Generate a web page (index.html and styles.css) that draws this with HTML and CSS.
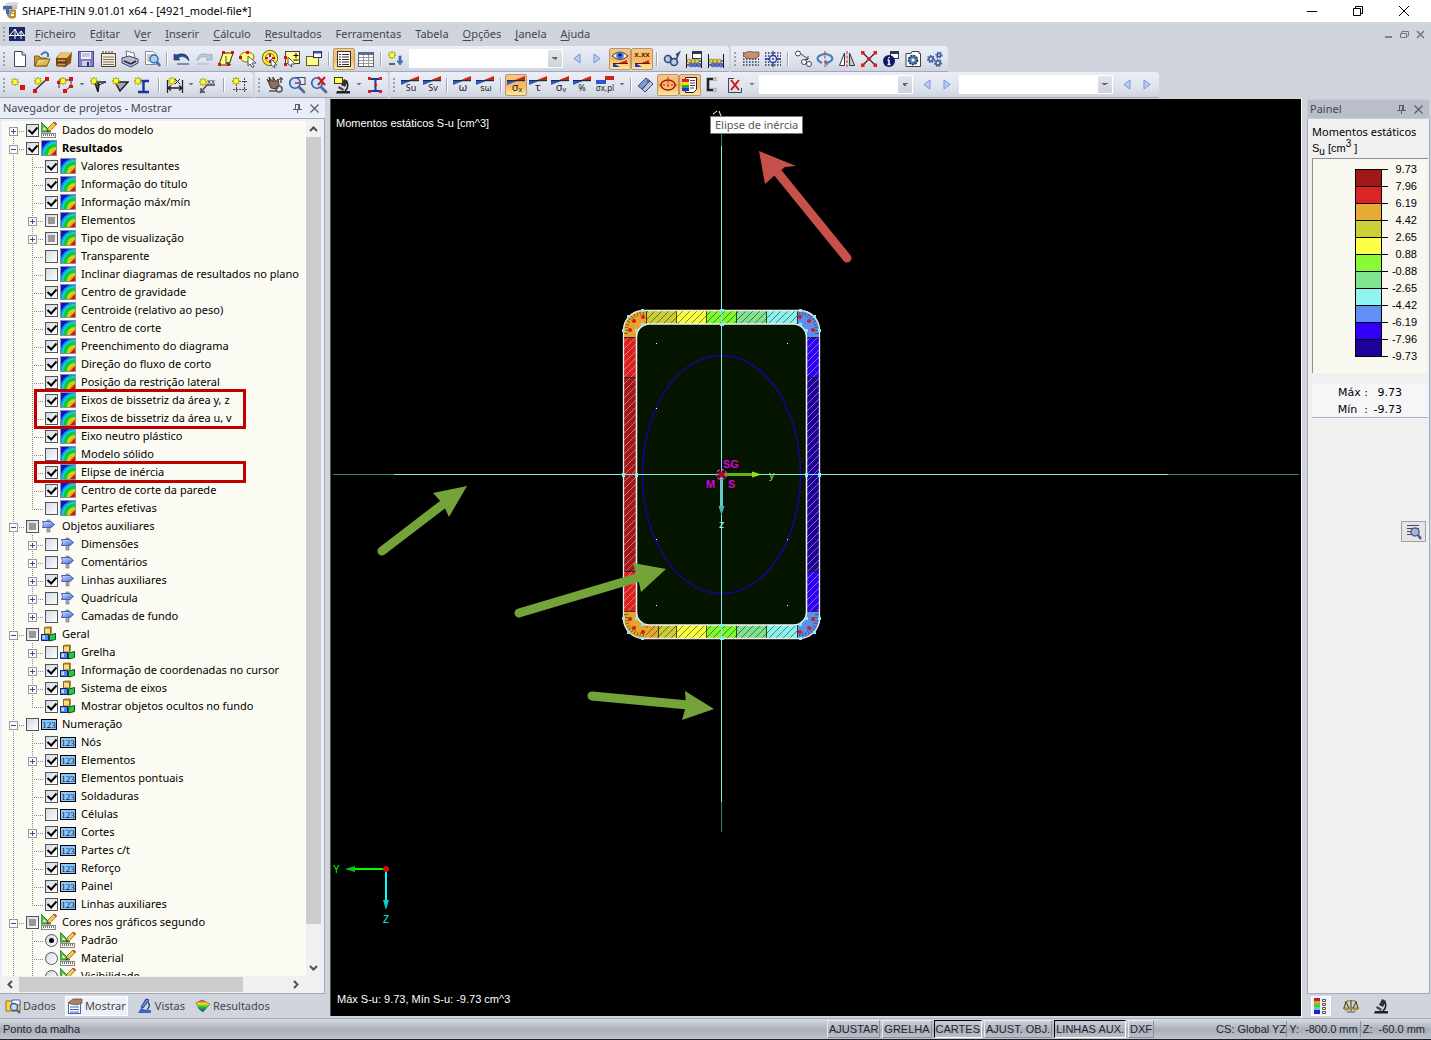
FILE: index.html
```html
<!DOCTYPE html>
<html lang="pt">
<head>
<meta charset="utf-8">
<title>SHAPE-THIN 9.01.01 x64 - [4921_model-file*]</title>
<link rel="stylesheet" href="styles.css">
</head>
<body>
<svg class="defs" width="0" height="0" aria-hidden="true">
  <defs>
    <linearGradient id="gBlue" x1="0" y1="0" x2="1" y2="1"><stop offset="0" stop-color="#c9e4ff"/><stop offset="1" stop-color="#3f66d8"/></linearGradient>
    <linearGradient id="gFold" x1="0" y1="0" x2="1" y2="1"><stop offset="0" stop-color="#fbe9a0"/><stop offset="1" stop-color="#c79a2a"/></linearGradient>
    <linearGradient id="gGrey" x1="0" y1="0" x2="0" y2="1"><stop offset="0" stop-color="#e4e4e8"/><stop offset="1" stop-color="#777a88"/></linearGradient>
    <linearGradient id="gSpec" x1="0" y1="0" x2="0" y2="1"><stop offset="0" stop-color="#e02010"/><stop offset=".3" stop-color="#f5e020"/><stop offset=".6" stop-color="#20c030"/><stop offset="1" stop-color="#1030e0"/></linearGradient>
    <pattern id="hatchDark" width="7" height="7" patternUnits="userSpaceOnUse"><path d="M-1 8L8 -1M-1 1L1 -1M6 8L8 6" stroke="#1c3a10" stroke-opacity=".75" stroke-width=".8"/></pattern>
    <pattern id="hatchLight" width="7" height="7" patternUnits="userSpaceOnUse"><path d="M-1 8L8 -1M-1 1L1 -1M6 8L8 6" stroke="#e8dcf0" stroke-opacity=".6" stroke-width=".8"/></pattern>
    <symbol id="star" viewBox="0 0 8 8"><path d="M4 0V8M0 4H8M1 1L7 7M7 1L1 7" stroke="#a8a800" stroke-width="1.4"/><circle cx="4" cy="4" r="2.2" fill="#ffff20"/></symbol>
    <symbol id="rb" viewBox="0 0 16 16"><rect width="16" height="16" fill="#8a8f98"/><svg x="1" y="1" width="14" height="14" viewBox="0 0 14 14"><rect width="14" height="14" fill="#1010d0"/><circle cx="14" cy="14" r="15" fill="#1090f0"/><circle cx="14" cy="14" r="13" fill="#10d8e0"/><circle cx="14" cy="14" r="11.500" fill="#10c840"/><circle cx="14" cy="14" r="8" fill="#c8e010"/><circle cx="14" cy="14" r="6" fill="#f0b010"/><path d="M14 9V14H9Z" fill="#e01010"/></svg></symbol>
    <symbol id="model" viewBox="0 0 16 16"><path d="M0 0L10 10H0Z" fill="#58b848" stroke="#2f8a2a"/><path d="M2.500 5L5.500 8H2.500Z" fill="#fcfcf4"/><path d="M6 10L7 6L13 0L15.500 2L9.500 8.500Z" fill="#f0cc50" stroke="#856018" stroke-width=".8"/><path d="M12.500 .5L14 0L16 2L14.800 3Z" fill="#c03030"/><path d="M6 10L6.500 7.500L8.500 9Z" fill="#333"/><rect x=".5" y="11.500" width="14" height="4" fill="#f4f4f4" stroke="#888"/><path d="M2.500 12V14M4.500 12V14M6.500 12V14M8.500 12V14M10.500 12V14M12.500 12V14" stroke="#777"/></symbol>
    <symbol id="sign" viewBox="0 0 16 16"><rect x="6" y="2" width="3" height="12" fill="#a8a8a8" stroke="#707070" stroke-width=".6"/><path d="M1.500 3.500H10L13.500 6.500L10 9.500H1.500L2.500 6.500Z" fill="url(#gBlue)" stroke="#4a5fb8"/></symbol>
    <symbol id="cubes" viewBox="0 0 16 16"><path d="M3 1.500L5 .5H11V7L9 8.500H3Z" fill="#b89030"/><rect x="3.500" y="2" width="6" height="6" fill="#f8dc80" stroke="#604810" stroke-width=".7"/><rect x=".5" y="8.500" width="7" height="6" fill="#5088f0" stroke="#152870"/><path d="M1.500 9.500H4V13H1.500Z" fill="#b8dcff"/><path d="M8.500 9L14.500 7.500V13.500L8.500 15Z" fill="#28c850" stroke="#0c5020"/></symbol>
    <symbol id="num" viewBox="0 0 16 16"><rect x=".5" y="3.500" width="15" height="10" fill="#8cc4ff" stroke="#000"/><text x="8" y="12" font-family="Liberation Serif,serif" font-size="9" text-anchor="middle" fill="#001830">123</text></symbol>
    <symbol id="sig" viewBox="0 0 18 18"><path d="M0 4H18V5.200H0Z" fill="#252a38"/><path d="M8 4L18 0V4Z" fill="#c82818"/><path d="M0 5H10L0 9Z" fill="#2858c8"/></symbol>
    <symbol id="prev" viewBox="0 0 8 12"><path d="M7 1V10L.8 5.500Z" fill="#b4ccf8" stroke="#7c94d0"/></symbol>
    <symbol id="next" viewBox="0 0 8 12"><path d="M1 1V10L7.200 5.500Z" fill="#b4ccf8" stroke="#7c94d0"/></symbol>
    <symbol id="micro" viewBox="0 0 16 16"><path d="M9 1L13 3L10 9L6 7Z" fill="#333"/><path d="M11 3Q15 8 10 13" fill="none" stroke="#222" stroke-width="1.600"/><path d="M4 8L9 11L8 13L3 10Z" fill="#444"/><path d="M2 13H15V15.500H1Z" fill="#222"/></symbol>
    <symbol id="pin" viewBox="0 0 9 9"><path d="M2.500 0V5.500M6.500 0V5.500M2 .5H7M0 5.500H9M4.500 6V9M5.500 0V5" stroke="#5a5e68" fill="none"/></symbol>
    <symbol id="cross" viewBox="0 0 9 9"><path d="M.5 .5L8.500 8.500M8.500 .5L.5 8.500" stroke="#5a5e68" stroke-width="1.200"/></symbol>
    <symbol id="lens" viewBox="0 0 18 18"><circle cx="7" cy="7" r="5.300" fill="#c8e4fa" stroke="#3858a8" stroke-width="1.600"/><path d="M11 11L16 16" stroke="#5068a0" stroke-width="2.800" stroke-linecap="round"/></symbol>
    <symbol id="gridDots" viewBox="0 0 18 18"><path d="M1 3H17M1 6H17M1 9H17M1 12H17M1 15H17" stroke="#303848" stroke-width="1.500" stroke-dasharray="1.500 1.500"/></symbol>
    <symbol id="abacus" viewBox="0 0 18 18"><path d="M1.500 4V18M16.500 4V18M1 11H17M1 15H17" stroke="#151515" fill="none"/><g fill="#e8d040" stroke="#705c10" stroke-width=".5"><circle cx="4" cy="11" r="2"/><circle cx="8" cy="11" r="2"/><circle cx="12" cy="11" r="2"/></g><g fill="#5878d0" stroke="#203070" stroke-width=".5"><circle cx="6" cy="15" r="2"/><circle cx="10" cy="15" r="2"/><circle cx="14" cy="15" r="2"/></g></symbol>
  </defs>
</svg>

<header class="titlebar">
  <svg class="appicon" width="16" height="18" viewBox="0 0 16 18"><path d="M1 4L6 0H16L15 7L9 9V17L5 14V9L1 8Z" fill="url(#gGrey)"/><path d="M1 4H10V7H7V12H4V7H1Z" fill="#4868a8"/><path d="M8 8H14V15Q12 18 8 16V14H12V12Q8 13 8 8ZM10 10H12V11H10Z" fill="#c09020" fill-rule="evenodd"/></svg>
  <h1>SHAPE-THIN 9.01.01 x64 - [4921_model-file*]</h1>
  <div class="winbtns">
    <button aria-label="Minimizar"><svg width="12" height="12"><path d="M1 6.500H11" stroke="#000"/></svg></button>
    <button aria-label="Restaurar"><svg width="12" height="12"><path d="M1.500 3.500H8.500V10.500H1.500ZM3.500 3V1.500H10.500V8.500H9" fill="none" stroke="#000"/></svg></button>
    <button aria-label="Fechar"><svg width="12" height="12"><path d="M1 1L11 11M11 1L1 11" stroke="#000"/></svg></button>
  </div>
</header>

<nav class="menubar">
  <i class="grip"></i>
  <svg class="logo" width="16" height="14" viewBox="0 0 16 14"><rect width="16" height="14" fill="#182868"/><path d="M0 8.500H16M6 2L1 8M6 2L9 8M12 4L9 8M12 4L15 8M6 2V12M12 4V12" stroke="#fff" fill="none"/></svg>
  <a href="#"><u>F</u>icheiro</a><a href="#">E<u>d</u>itar</a><a href="#">V<u>e</u>r</a><a href="#"><u>I</u>nserir</a><a href="#"><u>C</u>álculo</a><a href="#"><u>R</u>esultados</a><a href="#">Ferra<u>m</u>entas</a><a href="#">Tabela</a><a href="#"><u>O</u>pções</a><a href="#"><u>J</u>anela</a><a href="#"><u>A</u>juda</a>
  <div class="docbtns">
    <button aria-label="Minimizar documento"><svg width="9" height="9"><path d="M1 7H8" stroke="#666" stroke-width="1.500"/></svg></button>
    <button aria-label="Restaurar documento"><svg width="9" height="9"><path d="M.5 3.500H6.500V7.500H.5ZM2 3V1.500H8.500V6H7" fill="none" stroke="#777"/></svg></button>
    <button aria-label="Fechar documento"><svg width="9" height="9"><path d="M1 1L8 8M8 1L1 8" stroke="#777" stroke-width="1.600"/></svg></button>
  </div>
</nav>

<div class="bars">
<div class="barline">
  <div class="bar" role="toolbar">
    <i class="grip"></i>
    <button><svg><path d="M3.500 1.500H11L14.500 5V16.500H3.500Z" fill="#fff" stroke="#404858"/><path d="M11 1.500V5H14.500" fill="#d8dce8" stroke="#404858"/></svg></button>
    <button><svg><path d="M1.500 16V6H6L8 8H14V16Z" fill="#c89a30" stroke="#806010"/><path d="M2 16L5 9H17L14 16Z" fill="url(#gFold)" stroke="#806010"/><path d="M8 5Q12 0 15 4V7" stroke="#4870b8" stroke-width="2" fill="none"/></svg></button>
    <button><svg><path d="M1 8L6 2H17L16 13L10 17L1 15Z" fill="#8a5414"/><path d="M6 2H17L12 8H2Z" fill="#e8c078"/><path d="M2 9H11V12H2ZM2 13H11V16H2Z" fill="#d89840" stroke="#4a2c08"/></svg></button>
    <button><svg><rect x="1.500" y="1.500" width="15" height="15" fill="#8080c8" stroke="#484890"/><rect x="4" y="2" width="10" height="7" fill="#f0f0fa"/><path d="M5 4H13M5 6H13" stroke="#b090b0"/><rect x="5" y="11" width="8" height="5" fill="#d0d0d8"/><rect x="10" y="12" width="2" height="4" fill="#303060"/></svg></button>
    <button><svg><path d="M2.500 3.500H16.500V16.500H2.500Z" fill="#f4ece0" stroke="#504030"/><path d="M4 1V4M7 1V4M10 1V4M13 1V4" stroke="#504030"/><path d="M4 7H15M4 9.500H15M4 12H15M4 14.500H15" stroke="#807060"/></svg></button>
    <button><svg><path d="M5 1L13 3L14 9L6 8Z" fill="#fff" stroke="#707888"/><path d="M1 8L8 6L17 9V13L10 17L1 13Z" fill="#b8bcd0" stroke="#404858"/><path d="M3 11L10 14L15 11" stroke="#202838" stroke-width="1.500" fill="none"/></svg></button>
    <button><svg><path d="M2.500 1.500H10L13.500 5V14.500H2.500Z" fill="#fff" stroke="#888"/><path d="M4 5H10M4 7H9M4 9H8M4 11H8" stroke="#999"/><circle cx="11" cy="9" r="4" fill="#a8d0f4" stroke="#3868b0" stroke-width="1.500"/><path d="M14 12L17 16" stroke="#3868b0" stroke-width="2.500"/></svg></button>
    <i class="sep"></i>
    <button><svg><path d="M1 4V10H7L5 8Q11 4 16 11Q15 1 3 5Z" fill="#284898" stroke="#182858" stroke-width=".6"/><path d="M4 14H16" stroke="#203878"/></svg></button>
    <button><svg><path d="M17 4V10H11L13 8Q7 4 2 11Q3 1 15 5Z" fill="#b8c8e0" stroke="#8898b8" stroke-width=".6"/><path d="M2 14H14" stroke="#a0b0d0"/></svg></button>
    <button><svg><path d="M2 15L6 3H16L12 15Z" fill="#ffff80" stroke="#303000"/><g fill="#e01010"><path d="M1 13H4V16H1ZM5 1H8V4H5ZM14 1H17V4H14ZM10 13H13V16H10Z"/></g><path d="M9 6V14L11 12L14 15" fill="none" stroke="#444"/></svg></button>
    <button><svg><ellipse cx="8" cy="7" rx="7" ry="5" fill="#ffff80" stroke="#707000"/><g fill="#e01010"><path d="M7 1H10V4H7ZM0 6H3V9H0Z"/></g><path d="M9 6L17 13L13 13L15 17L13 17L11 14L9 16Z" fill="#fff" stroke="#555"/></svg></button>
    <button><svg><circle cx="9" cy="8" r="6" fill="none" stroke="#504c10" stroke-width="4"/><circle cx="9" cy="8" r="6" fill="none" stroke="#ffee20" stroke-width="2.500"/><path d="M8 4H10V7H8ZM8 10H10V13H8ZM4 7H7V9H4ZM11 7H14V9H11Z" fill="#e01010"/><path d="M10 9L16 15L13 15L14 18L10 15Z" fill="#fff" stroke="#555"/></svg></button>
    <button><svg><rect x="2.500" y="1.500" width="14" height="12" fill="#ffff90" stroke="#404040"/><path d="M13 3V8M10.500 5.500H15.500M10.500 10H15.500" stroke="#000"/><path d="M1 6H4V9H1ZM1 13H4V16H1Z" fill="#e01010"/><path d="M5 7L12 14L8 14L9 17L5 14Z" fill="#fff" stroke="#555"/></svg></button>
    <button><svg><rect x="1.500" y="6.500" width="12" height="9" fill="#ffff90" stroke="#605c20"/><rect x="8.500" y="1.500" width="8" height="6" fill="#fff" stroke="#283060"/><path d="M9 2.500H16" stroke="#3858a8" stroke-width="2"/></svg></button>
    <i class="sep"></i>
    <button class="on"><svg><rect x="2.500" y="1.500" width="13" height="15" fill="#fff" stroke="#303030"/><path d="M7 4.500H14M7 7H14M7 9.500H14M7 12H14M7 14.500H14" stroke="#303030"/><path d="M4 4.500H6M4 7H6M4 9.500H6M4 12H6M4 14.500H6" stroke="#303030"/></svg></button>
    <button><svg><rect x="1.500" y="2.500" width="15" height="14" fill="#fff" stroke="#666"/><path d="M2 4H16" stroke="#5070a8" stroke-width="2"/><path d="M2 7.500H16M2 10.500H16M2 13.500H16M6.500 5V16M11.500 5V16" stroke="#999"/></svg></button>
    <i class="sep"></i>
    <button><svg><use href="#star" x="1" y="1" width="8" height="8"/><path d="M2 14H8" stroke="#333" stroke-width="1.500"/><path d="M12 6H14V11H16L13 15L10 11H12Z" fill="#4878c8" stroke="#284890" stroke-width=".6"/></svg></button>
    <select aria-label="Caso de carga"><option></option></select>
    <button class="nav"><svg class="tri"><use href="#prev"/></svg></button>
    <button class="nav lastnav"><svg class="tri"><use href="#next"/></svg></button>
    <button class="on"><svg><path d="M1 6Q9 -2 17 6Q9 13 1 6Z" fill="#f4f8ff" stroke="#303848"/><circle cx="9" cy="5.500" r="3.800" fill="#4878d8"/><circle cx="9" cy="5" r="1.600" fill="#081028"/><path d="M2 13V17H9Z" fill="#1838e0"/><path d="M16 14V10L8 13Z" fill="#e02010"/><path d="M2 13.500H17" stroke="#502010"/></svg></button>
    <button class="on"><svg><text x="9" y="7" font-family="Liberation Sans,sans-serif" font-weight="bold" font-size="8" text-anchor="middle" fill="#402800">x.xx</text><path d="M2 13V17H9Z" fill="#1838e0"/><path d="M16 14V10L8 13Z" fill="#e02010"/><path d="M2 13.500H17" stroke="#502010"/></svg></button>
    <i class="sep"></i>
    <button><svg><circle cx="5" cy="9" r="3.500" fill="#b8c8e8" stroke="#384878" stroke-width="1.600"/><circle cx="11" cy="12" r="3.500" fill="#b8c8e8" stroke="#384878" stroke-width="1.600"/><path d="M7 7L9 10M13 10L16 3L13 5" stroke="#384878" stroke-width="1.800" fill="none"/></svg></button>
    <button><svg><use href="#abacus" width="18" height="18"/><rect x="7.500" y="1.500" width="9" height="7" fill="#fff" stroke="#303848"/><path d="M8 3H16" stroke="#303848" stroke-width="2"/></svg></button>
    <button><svg><use href="#abacus" width="18" height="18"/></svg></button>
  </div>
  <div class="bar" role="toolbar">
    <i class="grip"></i>
    <button><svg><use href="#gridDots" width="18" height="18"/><path d="M1 5Q5 0 11 2H17V6L12 9L4 8Z" fill="#c8906c" stroke="#604030" stroke-width=".7"/></svg></button>
    <button><svg><use href="#gridDots" width="18" height="18"/><path d="M9 1V17M1 9H17" stroke="#2838a0" stroke-width="1.300"/><circle cx="9" cy="9" r="3.500" fill="#dce8ff" stroke="#2838a0" stroke-width="1.300"/><circle cx="9" cy="9" r="1" fill="#2838a0"/></svg></button>
    <i class="sep"></i>
    <button><svg><circle cx="4" cy="3.500" r="2.500" fill="#fff" stroke="#444"/><circle cx="10" cy="12" r="2.500" fill="#fff" stroke="#444"/><circle cx="15" cy="14" r="2.500" fill="#fff" stroke="#444"/><path d="M7 4L14 9M14 6V9.500H11" stroke="#444" fill="none"/></svg></button>
    <button><svg><path d="M6 13Q-1 10 3 6Q9 2 15 6Q19 10 11 13" fill="none" stroke="#4880b8" stroke-width="2.200"/><path d="M11 10L8 13L12 16Z" fill="#4880b8"/><path d="M9 1V17" stroke="#d02020" stroke-dasharray="3 1.500"/></svg></button>
    <button><svg><path d="M6.500 3V15.500H1.500Z" fill="#fff" stroke="#333"/><path d="M11.500 3V15.500H16.500Z" fill="#ccc" stroke="#333"/><path d="M9 1V17" stroke="#d02020" stroke-dasharray="3 1.500"/></svg></button>
    <button><svg><path d="M3 3L15 15M15 3L3 15" stroke="#222" stroke-width="1.300"/><path d="M1 1H4.500V4.500H1ZM13.500 1H17V4.500H13.500ZM1 13.500H4.500V17H1ZM13.500 13.500H17V17H13.500ZM7 7H11V11H7Z" fill="#e02020"/></svg></button>
    <button><svg><rect x="8.500" y="1.500" width="8" height="7" fill="#fff" stroke="#303848"/><path d="M9 3H16" stroke="#303848" stroke-width="2"/><circle cx="7" cy="11" r="6" fill="#101868"/><path d="M7 7V8.500M7 10V15M5.500 10H7M5.500 14.500H8.500" stroke="#fff" stroke-width="1.500"/></svg></button>
    <button><svg><path d="M2 3.500H7L8 1.500H15V3.500H16.500V16.500H2Z" fill="#fff" stroke="#404040"/><circle cx="9" cy="10" r="4.500" fill="#5878b0" stroke="#203058" stroke-width="1.600" stroke-dasharray="2 1"/><circle cx="9" cy="10" r="1.600" fill="#fff"/></svg></button>
    <button><svg><g fill="#c8d8f4" stroke="#385898" stroke-width="1.500"><circle cx="5" cy="9" r="2.200"/><circle cx="13" cy="5" r="1.800"/><circle cx="12" cy="13" r="2.200"/></g><g fill="none" stroke="#385898" stroke-width="1.200" stroke-dasharray="1.500 1.500"><circle cx="5" cy="9" r="3.500"/><circle cx="13" cy="5" r="3"/><circle cx="12" cy="13" r="3.500"/></g></svg></button>
  </div>
</div>
<div class="barline">
  <div class="bar spaced" role="toolbar">
    <i class="grip"></i>
    <button class="nav"><svg><use href="#star" x="1" y="2" width="8" height="8"/><rect x="10" y="9" width="5" height="5" fill="#e01010"/></svg></button>
    <button class="wide"><svg><path d="M2 15L15 3" stroke="#333" stroke-width="1.500"/><use href="#star" x="2" y="1" width="8" height="8"/><path d="M1 13H5V17H1ZM13 1H17V5H13Z" fill="#e01010"/></svg></button>
    <button class="wide"><svg><path d="M3 4H15V10L9 15M3 4V12" stroke="#333" fill="none"/><use href="#star" x="3" y="1" width="8" height="8"/><path d="M1 5H4V8H1ZM13 1H17V5H13ZM13 9H17V12H13ZM7 13H11V17H7Z" fill="#e01010"/></svg></button>
    <i class="drop"></i>
    <button><svg><path d="M3 6H17M6 7L9 16L10 8Z" stroke="#222" stroke-width="1.500" fill="#556"/><path d="M10 9L17 6" stroke="#333"/><use href="#star" x="1" y="1" width="8" height="8"/></svg></button>
    <button><svg><path d="M4 6H17L9 15Z" fill="#a8a8a8" stroke="#222" stroke-width="1.500"/><use href="#star" x="1" y="1" width="8" height="8"/></svg></button>
    <button><svg><path d="M5 5H16M5 16H16M10.500 5V16" stroke="#1838a0" stroke-width="2.500"/><use href="#star" x="1" y="1" width="8" height="8"/></svg></button>
    <i class="sep"></i>
    <button><svg><path d="M1.500 4V17M16.500 4V17M2 12H16M5 9.500L2 12L5 14.500M13 9.500L16 12L13 14.500" stroke="#222" stroke-width="1.300" fill="none"/><use href="#star" x="2" y="1" width="8" height="8"/><path d="M9 3L14 8M14 3L9 8" stroke="#222"/></svg></button>
    <i class="drop"></i>
    <button><svg><path d="M2 17L9 9H17M3 12V16H7" stroke="#444" fill="none" stroke-width="1.300"/><text x="9" y="8" font-family="Liberation Sans,sans-serif" font-size="8" fill="#222">xx</text><use href="#star" x="1" y="2" width="8" height="8"/></svg></button>
    <i class="sep"></i>
    <button><svg><path d="M5.500 2V17M13.500 2V17M2 5.500H17M2 13.500H17" stroke="#444" stroke-dasharray="2 1"/><use href="#star" x="1" y="1" width="8" height="8"/></svg></button>
  </div>
  <div class="bar" role="toolbar">
    <i class="grip"></i>
    <button><svg><path d="M1 3L4 6L3 1L7 6L7 1L10 6L12 3L13 9L11 13L5 12Z" fill="#907060" stroke="#403020"/><circle cx="13" cy="13" r="3" fill="none" stroke="#555" stroke-width="1.500"/><path d="M3 15H10M13 3H17M15 1V7" stroke="#555" stroke-width="1.500"/></svg></button>
    <button><svg><rect x="8" y="1.500" width="9" height="7" fill="none" stroke="#444"/><use href="#lens" width="18" height="18"/><path d="M7 7H12" stroke="#e02020" stroke-width="1.500"/></svg></button>
    <button><svg><use href="#lens" width="18" height="18"/><path d="M8 1L15 9M15 1L8 9" stroke="#d01818" stroke-width="2"/></svg></button>
    <button class="wide"><svg><rect x="1.500" y="1.500" width="8" height="6" fill="#ffff60" stroke="#404000"/><use href="#micro" x="2" y="2" width="16" height="16"/></svg></button>
    <i class="drop"></i>
    <button><svg><path d="M4 3H15M4 15H15M9.500 3V15" stroke="#1838a0" stroke-width="2"/><path d="M2 1H5V4H2ZM13 1H16V4H13ZM2 14H5V17H2ZM13 14H16V17H13ZM8 8H11V10H8Z" fill="#e02020"/></svg></button>
  </div>
  <div class="bar last" role="toolbar">
    <i class="grip"></i>
    <button><svg class="sg"><use href="#sig" width="18" height="18"/><text x="10" y="15">Su</text></svg></button>
    <button><svg class="sg"><use href="#sig" width="18" height="18"/><text x="10" y="15">Sv</text></svg></button>
    <i class="sep"></i>
    <button><svg class="sg"><use href="#sig" width="18" height="18"/><text x="10" y="15" class="big">ω</text></svg></button>
    <button class="wide"><svg class="sg"><use href="#sig" width="18" height="18"/><text x="10" y="15">sω</text></svg></button>
    <i class="sep"></i>
    <button class="on"><svg class="sg"><use href="#sig" width="18" height="18"/><text x="10" y="15" class="big">σₓ</text></svg></button>
    <button><svg class="sg"><use href="#sig" width="18" height="18"/><text x="9" y="15" class="big">τ</text></svg></button>
    <button><svg class="sg"><use href="#sig" width="18" height="18"/><text x="10" y="15" class="big">σᵥ</text></svg></button>
    <button><svg class="sg"><use href="#sig" width="18" height="18"/><text x="9" y="15">%</text></svg></button>
    <button class="wide"><svg class="sg"><rect x="0" y="4" width="10" height="4" fill="#2858c8"/><rect x="9" y="0" width="9" height="4" fill="#c82818"/><text x="9" y="15" class="small">σx,pl</text></svg></button>
    <i class="drop"></i>
    <i class="sep"></i>
    <button><svg><path d="M1 10L9 2L13 5L5 13Z" fill="#70a0e0" stroke="#384868"/><path d="M5 13L13 5L16 8L8 16Z" fill="#a8c8f0" stroke="#384868"/><path d="M10 6L12 4M6 12L8 10" stroke="#d02020" stroke-width="1.500"/></svg></button>
    <button class="on"><svg><ellipse cx="9" cy="9" rx="7" ry="5" fill="none" stroke="#802010" stroke-width="1.400"/><path d="M9 1V17M0 9H18" stroke="#d02010" stroke-dasharray="2 2"/></svg></button>
    <button class="on"><svg><path d="M4.500 1.500H15.500V13.500L12.500 16.500H4.500Z" fill="#fff" stroke="#222"/><path d="M1 3H8V6H1Z" fill="#e02020"/><path d="M1 6H8V9H1Z" fill="#f0e020"/><path d="M1 9H8V12H1Z" fill="#20b030"/><path d="M1 12H8V15H1Z" fill="#2030e0"/><path d="M9 4.500H14M9 7H14M9 9.500H14M9 12H13" stroke="#444"/></svg></button>
    <button><svg><path d="M14 3H5V14H14" fill="none" stroke="#222" stroke-width="2.600"/><path d="M10 3H14M10 14H14" stroke="#c8c0a8" stroke-width="2.600"/></svg></button>
    <button class="wide"><svg><path d="M2.500 2V16.500H15.500V12M2 2.500H8" fill="none" stroke="#444"/><path d="M5 4L13 14M13 4L5 14" stroke="#d01818" stroke-width="2"/></svg></button>
    <i class="drop"></i>
    <select aria-label="Vista"><option></option></select>
    <button class="nav"><svg class="tri"><use href="#prev"/></svg></button>
    <button class="nav"><svg class="tri"><use href="#next"/></svg></button>
    <select aria-label="Visibilidade"><option></option></select>
    <button class="nav"><svg class="tri"><use href="#prev"/></svg></button>
    <button class="nav"><svg class="tri"><use href="#next"/></svg></button>
  </div>
</div>
</div>

<main class="work">
  <aside class="navigator">
    <div class="panelhead"><h2>Navegador de projetos - Mostrar</h2>
      <button aria-label="Fixar"><svg width="9" height="9"><use href="#pin"/></svg></button>
      <button aria-label="Fechar"><svg width="9" height="9"><use href="#cross"/></svg></button></div>
    <div class="treebox">
      <div class="treeview">
        <ul class="tree">
          <li class="first"><div class="row"><span class="node"><button class="exp plus" aria-label="Expandir"></button></span><label><input type="checkbox" checked><svg><use href="#model"/></svg>Dados do modelo</label></div></li>
          <li><div class="row"><span class="node"><button class="exp" aria-label="Recolher"></button></span><label class="strong"><input type="checkbox" checked><svg><use href="#rb"/></svg>Resultados</label></div>
            <ul>
              <li><div class="row"><span class="node"></span><label><input type="checkbox" checked><svg><use href="#rb"/></svg>Valores resultantes</label></div></li>
              <li><div class="row"><span class="node"></span><label><input type="checkbox" checked><svg><use href="#rb"/></svg>Informação do título</label></div></li>
              <li><div class="row"><span class="node"></span><label><input type="checkbox" checked><svg><use href="#rb"/></svg>Informação máx/mín</label></div></li>
              <li><div class="row"><span class="node"><button class="exp plus" aria-label="Expandir"></button></span><label><input type="checkbox" class="mixed"><svg><use href="#rb"/></svg>Elementos</label></div></li>
              <li><div class="row"><span class="node"><button class="exp plus" aria-label="Expandir"></button></span><label><input type="checkbox" class="mixed"><svg><use href="#rb"/></svg>Tipo de visualização</label></div></li>
              <li><div class="row"><span class="node"></span><label><input type="checkbox"><svg><use href="#rb"/></svg>Transparente</label></div></li>
              <li><div class="row"><span class="node"></span><label><input type="checkbox"><svg><use href="#rb"/></svg>Inclinar diagramas de resultados no plano</label></div></li>
              <li><div class="row"><span class="node"></span><label><input type="checkbox" checked><svg><use href="#rb"/></svg>Centro de gravidade</label></div></li>
              <li><div class="row"><span class="node"></span><label><input type="checkbox" checked><svg><use href="#rb"/></svg>Centroide (relativo ao peso)</label></div></li>
              <li><div class="row"><span class="node"></span><label><input type="checkbox" checked><svg><use href="#rb"/></svg>Centro de corte</label></div></li>
              <li><div class="row"><span class="node"></span><label><input type="checkbox" checked><svg><use href="#rb"/></svg>Preenchimento do diagrama</label></div></li>
              <li><div class="row"><span class="node"></span><label><input type="checkbox" checked><svg><use href="#rb"/></svg>Direção do fluxo de corto</label></div></li>
              <li><div class="row"><span class="node"></span><label><input type="checkbox" checked><svg><use href="#rb"/></svg>Posição da restrição lateral</label></div></li>
              <li class="marked"><div class="row"><span class="node"></span><label><input type="checkbox" checked><svg><use href="#rb"/></svg>Eixos de bissetriz da área y, z</label></div><i class="mark two"></i></li>
              <li><div class="row"><span class="node"></span><label><input type="checkbox" checked><svg><use href="#rb"/></svg>Eixos de bissetriz da área u, v</label></div></li>
              <li><div class="row"><span class="node"></span><label><input type="checkbox" checked><svg><use href="#rb"/></svg>Eixo neutro plástico</label></div></li>
              <li><div class="row"><span class="node"></span><label><input type="checkbox"><svg><use href="#rb"/></svg>Modelo sólido</label></div></li>
              <li class="marked"><div class="row"><span class="node"></span><label><input type="checkbox" checked><svg><use href="#rb"/></svg>Elipse de inércia</label></div><i class="mark"></i></li>
              <li><div class="row"><span class="node"></span><label><input type="checkbox" checked><svg><use href="#rb"/></svg>Centro de corte da parede</label></div></li>
              <li class="end"><div class="row"><span class="node"></span><label><input type="checkbox"><svg><use href="#rb"/></svg>Partes efetivas</label></div></li>
            </ul></li>
          <li><div class="row"><span class="node"><button class="exp" aria-label="Recolher"></button></span><label><input type="checkbox" class="mixed"><svg><use href="#sign"/></svg>Objetos auxiliares</label></div>
            <ul>
              <li><div class="row"><span class="node"><button class="exp plus" aria-label="Expandir"></button></span><label><input type="checkbox"><svg><use href="#sign"/></svg>Dimensões</label></div></li>
              <li><div class="row"><span class="node"><button class="exp plus" aria-label="Expandir"></button></span><label><input type="checkbox"><svg><use href="#sign"/></svg>Comentários</label></div></li>
              <li><div class="row"><span class="node"><button class="exp plus" aria-label="Expandir"></button></span><label><input type="checkbox" checked><svg><use href="#sign"/></svg>Linhas auxiliares</label></div></li>
              <li><div class="row"><span class="node"><button class="exp plus" aria-label="Expandir"></button></span><label><input type="checkbox"><svg><use href="#sign"/></svg>Quadrícula</label></div></li>
              <li class="end"><div class="row"><span class="node"><button class="exp plus" aria-label="Expandir"></button></span><label><input type="checkbox"><svg><use href="#sign"/></svg>Camadas de fundo</label></div></li>
            </ul></li>
          <li><div class="row"><span class="node"><button class="exp" aria-label="Recolher"></button></span><label><input type="checkbox" class="mixed"><svg><use href="#cubes"/></svg>Geral</label></div>
            <ul>
              <li><div class="row"><span class="node"><button class="exp plus" aria-label="Expandir"></button></span><label><input type="checkbox"><svg><use href="#cubes"/></svg>Grelha</label></div></li>
              <li><div class="row"><span class="node"><button class="exp plus" aria-label="Expandir"></button></span><label><input type="checkbox" checked><svg><use href="#cubes"/></svg>Informação de coordenadas no cursor</label></div></li>
              <li><div class="row"><span class="node"><button class="exp plus" aria-label="Expandir"></button></span><label><input type="checkbox" checked><svg><use href="#cubes"/></svg>Sistema de eixos</label></div></li>
              <li class="end"><div class="row"><span class="node"></span><label><input type="checkbox" checked><svg><use href="#cubes"/></svg>Mostrar objetos ocultos no fundo</label></div></li>
            </ul></li>
          <li><div class="row"><span class="node"><button class="exp" aria-label="Recolher"></button></span><label><input type="checkbox"><svg><use href="#num"/></svg>Numeração</label></div>
            <ul>
              <li><div class="row"><span class="node"></span><label><input type="checkbox" checked><svg><use href="#num"/></svg>Nós</label></div></li>
              <li><div class="row"><span class="node"><button class="exp plus" aria-label="Expandir"></button></span><label><input type="checkbox" checked><svg><use href="#num"/></svg>Elementos</label></div></li>
              <li><div class="row"><span class="node"></span><label><input type="checkbox" checked><svg><use href="#num"/></svg>Elementos pontuais</label></div></li>
              <li><div class="row"><span class="node"></span><label><input type="checkbox" checked><svg><use href="#num"/></svg>Soldaduras</label></div></li>
              <li><div class="row"><span class="node"></span><label><input type="checkbox"><svg><use href="#num"/></svg>Células</label></div></li>
              <li><div class="row"><span class="node"><button class="exp plus" aria-label="Expandir"></button></span><label><input type="checkbox" checked><svg><use href="#num"/></svg>Cortes</label></div></li>
              <li><div class="row"><span class="node"></span><label><input type="checkbox" checked><svg><use href="#num"/></svg>Partes c/t</label></div></li>
              <li><div class="row"><span class="node"></span><label><input type="checkbox" checked><svg><use href="#num"/></svg>Reforço</label></div></li>
              <li><div class="row"><span class="node"></span><label><input type="checkbox" checked><svg><use href="#num"/></svg>Painel</label></div></li>
              <li class="end"><div class="row"><span class="node"></span><label><input type="checkbox" checked><svg><use href="#num"/></svg>Linhas auxiliares</label></div></li>
            </ul></li>
          <li><div class="row"><span class="node"><button class="exp" aria-label="Recolher"></button></span><label><input type="checkbox" class="mixed"><svg><use href="#model"/></svg>Cores nos gráficos segundo</label></div>
            <ul>
              <li><div class="row"><span class="node"></span><label><input type="radio" name="cores" checked><svg><use href="#model"/></svg>Padrão</label></div></li>
              <li><div class="row"><span class="node"></span><label><input type="radio" name="cores"><svg><use href="#model"/></svg>Material</label></div></li>
              <li><div class="row"><span class="node"></span><label><input type="radio" name="cores"><svg><use href="#model"/></svg>Visibilidade</label></div></li>
            </ul></li>
        </ul>
      </div>
      <div class="vscroll"><svg width="15" height="16"><path d="M4 10L7.500 6.500L11 10" fill="none" stroke="#505050" stroke-width="2"/></svg><i></i><svg width="15" height="16"><path d="M4 6L7.500 9.500L11 6" fill="none" stroke="#505050" stroke-width="2"/></svg></div>
      <div class="hscroll"><svg width="17" height="15"><path d="M10 4L6.500 7.500L10 11" fill="none" stroke="#505050" stroke-width="2"/></svg><i></i><svg width="17" height="15"><path d="M7 4L10.500 7.500L7 11" fill="none" stroke="#505050" stroke-width="2"/></svg></div>
    </div>
    <div class="tabs">
      <button><svg width="16" height="16"><path d="M1 3H15V13H1Z" fill="#f8d850" stroke="#907010"/><path d="M7 2H15V7H7Z" fill="#fff" stroke="#3868c0"/><circle cx="9" cy="9" r="3.500" fill="#c0e0ff" stroke="#385898" stroke-width="1.300"/><path d="M12 12L15 15" stroke="#385898" stroke-width="2"/></svg>Dados</button>
      <button class="cur"><svg width="16" height="16"><rect x="1.500" y="4.500" width="12" height="11" fill="#fff" stroke="#3868c0"/><path d="M3 9H12M3 11.500H12M3 14H12" stroke="#3868c0"/><path d="M2 4L6 1L15 1V5L10 7L3 6Z" fill="#a88068" stroke="#503828" stroke-width=".6"/></svg>Mostrar</button>
      <button><svg width="16" height="16"><path d="M9 1L12 2L6 10L4 9Z" fill="#6890e0" stroke="#203880"/><path d="M11 4Q14 8 10 12" fill="none" stroke="#3050a8" stroke-width="1.500"/><path d="M1 15L4 10L9 12H14V15Z" fill="#3868c8"/></svg>Vistas</button>
      <button><svg width="16" height="16"><path d="M1 5L7 2L15 6L8 14L4 11Z" fill="url(#gSpec)" stroke="#444" stroke-width=".5"/></svg>Resultados</button>
    </div>
  </aside>

  <section class="canvas">
    <svg class="scene" viewBox="331 99 970 917" preserveAspectRatio="xMinYMin meet">
      <rect x="623" y="310" width="197" height="328" rx="20" fill="#e5a52e"/>
      <path d="M722 310H800A20 20 0 0 1 820 330V618A20 20 0 0 1 800 638H722Z" fill="#5a90ee"/>
      <g>
        <path d="M623 337H637V377H623ZM623 572H637V611H623Z" fill="#dc2020"/><path d="M623 377H637V572H623Z" fill="#a01818"/>
        <path d="M806 337H820V377H806ZM806 572H820V611H806Z" fill="#2e00f2"/><path d="M806 377H820V572H806Z" fill="#1e0094"/>
        <path d="M646 310H676V324H646ZM659 625H676V638H659Z" fill="#cccc34"/><path d="M676 310H707V324H676ZM676 625H707V638H676Z" fill="#fdfd40"/>
        <path d="M707 310H737V324H707ZM707 625H737V638H707Z" fill="#80f830"/><path d="M737 310H767V324H737ZM737 625H767V638H737Z" fill="#80e090"/><path d="M767 310H797V324H767ZM767 625H797V638H767Z" fill="#8cf0f0"/>
        <path d="M646 310H797V324H646ZM646 625H797V638H646Z" fill="url(#hatchDark)"/><path d="M623 337H637V611H623ZM806 337H820V611H806Z" fill="url(#hatchLight)"/>
        <path d="M646.500 310V324M676.500 310V324M706.500 310V324M736.500 310V324M766.500 310V324M797.500 310V324M658.500 625V638M676.500 625V638M706.500 625V638M736.500 625V638M766.500 625V638M797.500 625V638M623 337.500H637M623 377.500H637M623 571.500H637M623 611.500H637M806 337.500H820M806 377.500H820M806 571.500H820M806 611.500H820" stroke="#182008" stroke-opacity=".8"/>
      </g>
      <g fill="none" stroke="#403008" stroke-width="4" stroke-dasharray="1 2"><path d="M626 334Q626 313 646 313M626 614Q626 635 646 635M817 334Q817 313 797 313M817 614Q817 635 797 635" stroke-opacity=".6"/></g>
      <rect x="636.500" y="324" width="170" height="301" rx="13" fill="#061500" stroke="#f4f4f4" stroke-width="1.500"/>
      <rect x="623.500" y="310.500" width="196" height="328" rx="20" fill="none" stroke="#f0e8e8" stroke-width="1.300"/>
      <ellipse cx="721.500" cy="474.500" rx="79" ry="119" fill="none" stroke="#1c0098" stroke-width="1.500"/>
      <g fill="#fff"><path d="M656 343h1v1h-1zM787 343h1v1h-1zM656 408h1v1h-1zM656 539h1v1h-1zM787 539h1v1h-1zM656 605h1v1h-1zM787 605h1v1h-1z"/></g>
      <path d="M333 474.500H394M1168 474.500H1299M721.500 117V146M721.500 802V832" stroke="#3c7c78"/>
      <path d="M394 474.500H1168M721.500 146V802" stroke="#88e8e4"/>
      <g fill="#80f0f0"><path d="M641 309h3v3h-3zM627 315h3v3h-3zM622 329h3v3h-3zM635 329h3v3h-3zM641 323h3v3h-3zM799 309h3v3h-3zM813 315h3v3h-3zM818 329h3v3h-3zM805 329h3v3h-3zM799 323h3v3h-3zM641 637h3v3h-3zM627 631h3v3h-3zM622 617h3v3h-3zM635 617h3v3h-3zM641 623h3v3h-3zM799 637h3v3h-3zM813 631h3v3h-3zM818 617h3v3h-3zM805 617h3v3h-3zM799 623h3v3h-3zM720 309h4v3h-4zM720 323h4v3h-4zM720 624h4v3h-4zM720 637h4v3h-4zM622 473h3v4h-3zM635 473h3v4h-3zM805 473h3v4h-3zM818 473h3v4h-3z"/></g>
      <g fill="#d81820"><circle cx="643" cy="317" r="2"/><circle cx="634" cy="321" r="2"/><circle cx="630" cy="330" r="2"/><circle cx="800" cy="317" r="2"/><circle cx="809" cy="321" r="2"/><circle cx="813" cy="330" r="2"/><circle cx="643" cy="632" r="2"/><circle cx="634" cy="628" r="2"/><circle cx="630" cy="619" r="2"/><circle cx="800" cy="632" r="2"/><circle cx="809" cy="628" r="2"/><circle cx="813" cy="619" r="2"/></g>
      <path d="M724 474.500H753" stroke="#68b018" stroke-width="3"/><path d="M752 471.500L762 474.500L752 477.500Z" fill="#90e020"/>
      <path d="M721.500 477V508" stroke="#68c8c8" stroke-width="3"/><path d="M718.500 506L721.500 515L724.500 506Z" fill="#48b8b8"/>
      <circle cx="721.500" cy="474.500" r="5" fill="none" stroke="#d040c8" stroke-width="1.500" stroke-dasharray="3 1.500"/><circle cx="721.500" cy="474.500" r="3" fill="#b80818"/>
      <g class="tag"><text x="723" y="468">SG</text><text x="706" y="488">M</text><text x="728" y="488">S</text></g>
      <text x="769" y="479" font-size="11" fill="#90f040">y</text><text x="719" y="528" font-size="11" fill="#90f8f0">z</text>
      <path d="M713 114L717 111M719 111L721 116" stroke="#fff"/>
      <g stroke-linecap="round"><path d="M847 258L778 173" stroke="#c8504a" stroke-width="9"/><path d="M759 151L765 184L775 175L785 167L796 166Z" fill="#c8504a"/>
        <path d="M382 551L446 502" stroke="#74a33a" stroke-width="9"/><path d="M467 486L449 517L443 504L433 493Z" fill="#74a33a"/>
        <path d="M519 613L640 577" stroke="#74a33a" stroke-width="9"/><path d="M666 569L641 592L638 578L633 563Z" fill="#74a33a"/>
        <path d="M592 696L688 705" stroke="#74a33a" stroke-width="9"/><path d="M714 709L682 720L686 706L685 691Z" fill="#74a33a"/></g>
      <path d="M354 869H386" stroke="#00ff00" stroke-width="2"/><path d="M345 869L355 866V872Z" fill="#00c820"/>
      <path d="M386 870V901" stroke="#00ffff" stroke-width="2"/><path d="M383 900H389L386 910Z" fill="#10c8c8"/><circle cx="386" cy="869" r="3" fill="#d80808"/>
      <text x="333" y="873" font-size="10" fill="#00ff00">Y</text><text x="383" y="923" font-size="10" fill="#00ffff">Z</text>
    </svg>
    <div class="caption top">Momentos estáticos S-u [cm^3]</div>
    <div class="caption bottom">Máx S-u: 9.73, Mín S-u: -9.73 cm^3</div>
    <div class="tip" role="tooltip">Elipse de inércia</div>
  </section>

  <aside class="side">
    <div class="panelhead dark"><h2>Painel</h2>
      <button aria-label="Fixar"><svg width="9" height="9"><use href="#pin"/></svg></button>
      <button aria-label="Fechar"><svg width="9" height="9"><use href="#cross"/></svg></button></div>
    <div class="sidebody">
      <h3>Momentos estáticos</h3>
      <p class="unit">S<sub>u</sub> [cm<sup>3</sup> ]</p>
      <div class="legend">
        <div class="swatches"><i class="c1"></i><i class="c2"></i><i class="c3"></i><i class="c4"></i><i class="c5"></i><i class="c6"></i><i class="c7"></i><i class="c8"></i><i class="c9"></i><i class="c10"></i><i class="c11"></i></div>
        <ul class="values"><li>9.73</li><li>7.96</li><li>6.19</li><li>4.42</li><li>2.65</li><li>0.88</li><li>-0.88</li><li>-2.65</li><li>-4.42</li><li>-6.19</li><li>-7.96</li><li>-9.73</li></ul>
      </div>
      <dl class="range"><dt>Máx&nbsp;:</dt><dd>9.73</dd><dt>Mín&nbsp; :</dt><dd>-9.73</dd></dl>
      <button class="detail" aria-label="Detalhes"><svg width="18" height="18"><path d="M2 2.500H14M2 5.500H14M2 8.500H7M2 11.500H7" stroke="#445"/><circle cx="10" cy="9" r="4" fill="#a8b4cc" stroke="#4c5c90" stroke-width="1.500"/><path d="M13 12L16 16" stroke="#4c5c90" stroke-width="2.500"/></svg></button>
    </div>
    <div class="sidetabs">
      <button class="cur" aria-label="Escala de cores"><svg width="16" height="16"><path d="M1 0H7V3H1Z" fill="#c02020"/><path d="M1 3H7V6H1Z" fill="#d8a030"/><path d="M1 6H7V9H1Z" fill="#40d820"/><path d="M1 9H7V12H1Z" fill="#60c8d0"/><path d="M1 12H7V16H1Z" fill="#2020d8"/><path d="M9.500 1.500h3v2h-3zM9.500 5.500h3v2h-3zM9.500 9.500h3v2h-3zM9.500 13.500h3v2h-3z" fill="none" stroke="#555"/></svg></button>
      <button aria-label="Fatores"><svg width="16" height="16"><path d="M8 2V13M2 4Q8 1 14 4M4 14H12M3 4L1 10M3 4L6 10M13 4L10 10M13 4L15 10" stroke="#5c5418" fill="none" stroke-width="1.200"/><path d="M0 10H7L5 12H2ZM9 10H16L14 12H11Z" fill="#c0b060" stroke="#5c5418" stroke-width=".6"/></svg></button>
      <button aria-label="Filtro"><svg width="16" height="16"><use href="#micro"/></svg></button>
    </div>
  </aside>
</main>

<footer class="status">
  <span class="msg">Ponto da malha</span>
  <button>AJUSTAR</button><button>GRELHA</button><button class="in">CARTES</button><button>AJUST. OBJ.</button><button class="in">LINHAS AUX.</button><button>DXF</button>
  <div class="coords"><span>CS: Global YZ</span><span>Y:&nbsp; -800.0 mm</span><span>Z:&nbsp; -60.0 mm</span></div>
</footer>
</body>
</html>
```
FILE: styles.css
```css
* { box-sizing: border-box; }
html, body { height: 100%; }
body {
  margin: 0;
  display: flex;
  flex-direction: column;
  overflow: hidden;
  background: #d0d4dd;
  color: #000;
  font: 11px/18px "Noto Sans", "Open Sans", sans-serif;
}
h1, h2, h3, p, ul, dl, dd { margin: 0; padding: 0; font: inherit; }
ul { list-style: none; }
button { margin: 0; padding: 0; border: 0; background: none; color: inherit; font: inherit; }
svg { display: block; flex: none; }
.defs { position: absolute; }

/* title and menu */
.titlebar { display: flex; flex: none; align-items: center; height: 22px; background: #fff; padding: 0 16px 0 2px; gap: 4px; }
.winbtns { display: flex; gap: 34px; margin-left: auto; padding-right: 5px; }
.menubar { display: flex; flex: none; align-items: center; height: 24px; padding: 0 6px 0 3px; color: #43464e; }
.menubar a { color: inherit; text-decoration: none; margin-right: 14px; }
.menubar u { text-underline-offset: 2px; }
.logo { margin: 0 10px 0 0; }
.docbtns { display: flex; gap: 7px; margin-left: auto; }

/* toolbars */
.bars { flex: none; height: 52px; }
.barline { display: flex; gap: 2px; height: 26px; }
.bar {
  display: flex;
  align-items: center;
  padding: 0 2px 0 3px;
  background: linear-gradient(#ebeef7, #dfe3ed 60%, #cfd4e0);
  border-bottom: 1px solid #a4a8b2;
  border-radius: 0 4px 0 0;
}
.grip { flex: none; width: 2px; height: 14px; margin-right: 4px; background: repeating-linear-gradient(#9ba0ac 0 2px, transparent 2px 4px); }
.bar button { display: grid; place-items: center; flex: none; width: 22px; height: 22px; }
.bar button.wide { width: 24px; }
.bar button svg { width: 18px; height: 18px; }
.bar button.nav { width: 20px; }
.bar button.lastnav { margin-right: 2px; }
.bar button svg.tri { width: 8px; height: 12px; }
.bar button.on { border: 1px solid #b29a70; border-radius: 2px; background: linear-gradient(#fbc58a, #f9b65c 50%, #fde6a0); }
.sep { flex: none; width: 8px; height: 14px; background: linear-gradient(90deg, #a0a4b0 1px, #fff 1px) 3px 0 / 2px 14px no-repeat; }
.spaced .sep { width: 11px; background-position: 5px 0; }
.drop { flex: none; width: 10px; height: 4px; background: #6c7078; clip-path: polygon(2px 0, 8px 0, 5px 3px); }
.bar select {
  appearance: none;
  width: 154px;
  height: 19px;
  margin: 0 4px 0 2px;
  border: 1px solid #fff;
  border-radius: 0;
  background:
    linear-gradient(45deg, transparent 50%, #666 50%) 142px 7px / 3px 3px no-repeat,
    linear-gradient(-45deg, transparent 50%, #666 50%) 145px 7px / 3px 3px no-repeat,
    linear-gradient(#e2e5ec, #ced2dc) 138px 0 / 14px 17px no-repeat, #fff;
}
.sg { overflow: visible; }
.sg text { font: 9px/9px "Noto Sans", sans-serif; text-anchor: middle; fill: #202428; }
.sg .big { font-size: 11px; }
.sg .small { font-size: 8px; }

/* work area */
.work { display: flex; flex: 1; min-height: 0; }
.navigator { display: flex; flex-direction: column; flex: none; width: 325px; margin-right: 5px; }
.panelhead { display: flex; align-items: center; flex: none; gap: 8px; height: 21px; padding: 0 6px 0 3px; background: #e9edf7; color: #43464e; border-bottom: 1px solid #a4a8b2; }
.panelhead h2 { margin-right: auto; }
.treebox {
  flex: 1;
  min-height: 0;
  display: grid;
  grid-template: minmax(0, 1fr) 17px / 1fr 15px;
  padding: 2px 3px 0 2px;
  background: #ebeef8;
  border: solid #a4a8b2;
  border-width: 0 1px 1px 0;
}
.treeview { overflow: hidden; background: #fcfbf3; }
.tree { padding-left: 7px; }
.tree ul { padding-left: 19px; }
.tree li { background: repeating-linear-gradient(#8c8c8c 0 1px, transparent 1px 2px) 4px 0 / 1px 100% no-repeat; }
.tree .first { background-position: 4px 10px; }
.tree .end { background-size: 1px 10px; }
.row { display: flex; align-items: center; height: 18px; }
.node { display: flex; align-items: center; width: 17px; height: 18px; background: repeating-linear-gradient(90deg, #8c8c8c 0 1px, transparent 1px 2px) 4px 10px / 12px 1px no-repeat; }
.exp {
  width: 9px;
  height: 9px;
  margin-top: 3px;
  border: 1px solid #98999c;
  background: linear-gradient(#30509c, #30509c) 1px 3px / 5px 1px no-repeat, #fcfcfc;
}
.exp.plus { background: linear-gradient(#30509c, #30509c) 1px 3px / 5px 1px no-repeat, linear-gradient(#30509c, #30509c) 3px 1px / 1px 5px no-repeat, #fcfcfc; }
.row label { display: flex; align-items: center; white-space: nowrap; }
.row label svg { width: 16px; height: 16px; margin: 0 5px 0 2px; }
.row .strong { font-weight: bold; }
.row input {
  appearance: none;
  display: grid;
  place-items: center;
  width: 13px;
  height: 13px;
  margin: 0;
  border: 1px solid #50545c;
  background: linear-gradient(135deg, #d4d8e2, #fff);
}
.row input[type="radio"] { border-radius: 50%; }
.row input[type="checkbox"]:checked::after { content: ""; width: 4px; height: 7px; margin-bottom: 2px; border: solid #000; border-width: 0 2px 2px 0; transform: rotate(42deg); }
.row input[type="radio"]:checked::after { content: ""; width: 5px; height: 5px; border-radius: 50%; background: #000; }
.row .mixed::after { content: ""; width: 7px; height: 7px; background: #989898; }
.marked { position: relative; }
.mark { position: absolute; left: 6px; top: -2px; width: 212px; height: 22px; border: 3px solid #c00000; }
.mark.two { height: 40px; }

.vscroll { display: flex; flex-direction: column; background: #f0f0f0; }
.vscroll i { height: 787px; margin-bottom: auto; background: #cdcdcd; }
.hscroll { grid-column: 1 / 3; display: flex; background: #f0f0f0; padding: 1px 17px 1px 0; }
.hscroll i { width: 224px; margin-right: auto; background: #cdcdcd; }

.tabs { display: flex; flex: none; align-items: center; gap: 8px; height: 24px; padding: 0 4px; color: #43464e; }
.tabs button { display: flex; align-items: center; gap: 2px; height: 20px; padding: 0 1px; }
.tabs .cur { background: #eef0f6; border: 1px solid #fff; }

/* drawing canvas */
.canvas { position: relative; flex: 1; min-width: 0; margin: 1px 0 2px; background: #000; border-left: 1px solid #555; }
.scene { position: absolute; inset: 0; width: 100%; height: 100%; font-family: "Liberation Sans", sans-serif; }
.tag { fill: #d800d8; font-weight: bold; font-size: 11px; }
.caption { position: absolute; color: #fff; font: 11px/16px "Liberation Sans", sans-serif; }
.caption.top { left: 5px; top: 16px; }
.caption.bottom { left: 6px; bottom: 9px; }
.tip { position: absolute; left: 379px; top: 17px; padding: 0 4px; border: 1px solid #777; background: #fff; color: #575757; line-height: 16px; }

/* results panel */
.side { display: flex; flex-direction: column; flex: none; width: 130px; padding: 1px 1px 0 5px; border-left: 1px solid #fff; }
.panelhead.dark { background: #b9beca; border: 1px solid #c8ccd8; height: 20px; padding-left: 2px; }
.sidebody { flex: 1; padding: 4px 1px 0 4px; background: #f0f0f0; border: 1px solid #a4a8c0; border-top: 0; }
.side h3 { line-height: 17px; white-space: nowrap; }
.unit { font: 11px/16px "Liberation Sans", sans-serif; }
.unit sub, .unit sup { font-size: 10px; line-height: 0; }
.legend { display: flex; height: 215px; margin-top: 2px; padding: 10px 11px 0 42px; background: #f8f7f0; border: solid #909090; border-width: 1px 0 0 1px; }
.swatches { display: flex; flex-direction: column; width: 33px; height: 188px; margin-right: auto; background: repeating-linear-gradient(#000 0 1px, transparent 1px 17px); }
.swatches i { width: 27px; height: 17px; border: 1px solid #000; border-bottom: 0; }
.swatches .c11 { height: 18px; border-bottom: 1px solid #000; }
.c1 { background: #a01818; } .c2 { background: #dc2424; } .c3 { background: #e8ac34; } .c4 { background: #ccd038; }
.c5 { background: #ffff48; } .c6 { background: #88fa38; } .c7 { background: #80e490; } .c8 { background: #90f4f0; }
.c9 { background: #6090f4; } .c10 { background: #3000f8; } .c11 { background: #1c0098; }
.values { margin-top: -8px; text-align: right; font: 11px/17px "Liberation Sans", sans-serif; }
.range { display: grid; grid-template-columns: 56px 34px; margin-top: 11px; height: 34px; font: 11px/17px "DejaVu Sans", "Liberation Sans", sans-serif; text-align: right; background: #f6f6f8; border-bottom: 1px solid #b0b0cc; }
.detail { display: grid; place-items: center; width: 25px; height: 21px; margin: 103px 2px 0 auto; border: 1px solid #a0a0a0; background: #e4e4e8; }
.sidetabs { display: flex; flex: none; align-items: center; gap: 10px; height: 24px; padding: 0 4px; }
.sidetabs button { display: grid; place-items: center; width: 20px; height: 20px; }
.sidetabs .cur { background: #eef0f6; border: 1px solid #fff; }

/* status bar */
.status {
  display: flex;
  align-items: center;
  flex: none;
  gap: 2px;
  height: 22px;
  padding: 0 4px 0 3px;
  border-top: 1px solid #a8acb8;
  border-bottom: 1px solid #202020;
  background: linear-gradient(#d8dbe2, #bcc1cb 30%, #a9afba 55%, #bfc4ce);
  font: 11px/16px "Liberation Sans", sans-serif;
  color: #20242c;
}
.msg { margin-right: auto; }
.status button { height: 18px; padding: 0 1px; border: 1px solid; border-color: #e8eaf0 #8c909a #8c909a #e8eaf0; line-height: 14px; }
.status .in { border-color: #000 #fff #fff #000; }
.coords { display: flex; margin-left: 60px; }
.coords span + span { padding-left: 2px; border-left: 1px solid #8c909a; }
.coords span { padding-right: 2px; }
.coords span:first-child { padding-right: 0; }
```
